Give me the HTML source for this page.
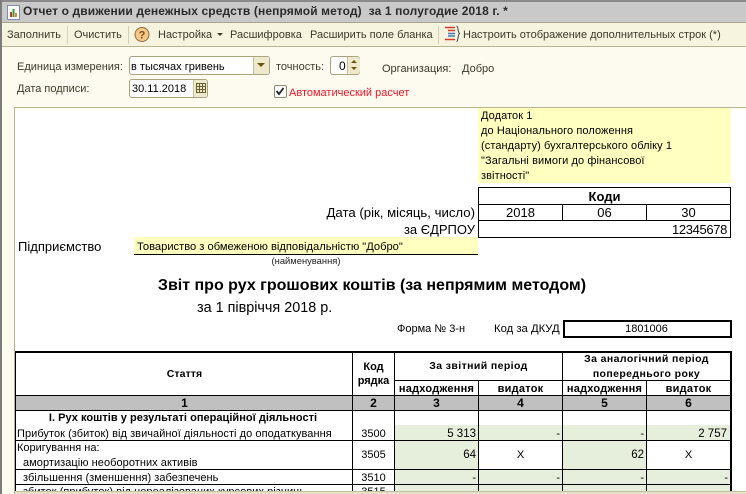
<!DOCTYPE html>
<html><head><meta charset="utf-8">
<style>
html,body{margin:0;padding:0}
body{width:746px;height:494px;position:relative;overflow:hidden;background:#fdfbef;font-family:"Liberation Sans",sans-serif;color:#1a1a1a}
.a{position:absolute;white-space:nowrap}
.l{position:absolute;white-space:nowrap;font-size:11px;line-height:15px;color:#3a3a2a}
.t{position:absolute;white-space:nowrap;font-size:11px;line-height:14px;color:#000}
.b{font-weight:bold}
.c{text-align:center}
.r{text-align:right}
.k{position:absolute;background:#000}
.g{position:absolute;background:#e6efdc}
</style></head><body>
<!-- window frame -->
<div class="a" style="left:0;top:0;width:746px;height:2px;background:#8a8a8a"></div>
<div class="a" style="left:0;top:0;width:2px;height:494px;background:#7c7c7c"></div>
<!-- title -->
<div class="a" style="left:2px;top:2px;width:744px;height:20px;background:#c9c9c9"></div>
<div class="a" style="left:2px;top:22px;width:744px;height:1px;background:#a8a48c"></div>
<svg class="a" style="left:6px;top:5px" width="15" height="15" viewBox="0 0 15 15"><rect x="1.5" y="0.5" width="12" height="14" fill="#fff" stroke="#7d8ca8"/><rect x="4" y="7" width="2" height="5" fill="#c0392b"/><rect x="6.5" y="4" width="2" height="8" fill="#3f9a3f"/><rect x="9" y="8" width="2" height="4" fill="#d08a20"/></svg>
<div class="a b" style="left:23px;top:4px;font-size:12px;line-height:15px;color:#2a2a2a;letter-spacing:.12px">Отчет о движении денежных средств (непрямой метод)&nbsp; за 1 полугодие 2018 г. *</div>
<!-- toolbar -->
<div class="a" style="left:2px;top:23px;width:744px;height:23px;background:#f6f3df"></div>
<div class="a" style="left:2px;top:46px;width:744px;height:1px;background:#b8b48f"></div>
<div class="l" style="left:7px;top:28px">Заполнить</div>
<div class="a" style="left:67px;top:26px;width:1px;height:18px;background:#d5d1b4"></div>
<div class="l" style="left:74px;top:28px">Очистить</div>
<div class="a" style="left:128px;top:26px;width:1px;height:18px;background:#d5d1b4"></div>
<svg class="a" style="left:134px;top:26px" width="16" height="17" viewBox="0 0 16 17"><circle cx="8" cy="8.5" r="7" fill="#f6c98a" stroke="#8c6a3c"/><text x="8" y="12.5" font-family="Liberation Sans" font-size="11" font-weight="bold" text-anchor="middle" fill="#7a4a16">?</text></svg>
<div class="l" style="left:158px;top:28px">Настройка</div>
<div class="a" style="left:217px;top:33px;width:0;height:0;border-left:3px solid transparent;border-right:3px solid transparent;border-top:3px solid #3a3a2a"></div>
<div class="l" style="left:230px;top:28px">Расшифровка</div>
<div class="l" style="left:310px;top:28px">Расширить поле бланка</div>
<div class="a" style="left:438px;top:26px;width:1px;height:18px;background:#d5d1b4"></div>
<svg class="a" style="left:444px;top:25px" width="17" height="18" viewBox="0 0 17 18"><path d="M1 2.5h10M4 5.5h7" stroke="#d83a2a" stroke-width="1.5"/><path d="M4 8.5h7M4 11h7" stroke="#3a7ab8" stroke-width="1.5"/><path d="M1 14.5h10" stroke="#d83a2a" stroke-width="1.5"/><path d="M12.500 1c2 0 1 6 3 7.500-2 1.500-1 8-3 8" fill="none" stroke="#33404f"/></svg>
<div class="l" style="left:463px;top:28px">Настроить отображение дополнительных строк (*)</div>
<!-- form -->
<div class="l" style="left:17px;top:60px">Единица измерения:</div>
<div class="a" style="left:129px;top:56px;width:139px;height:17px;background:#fff;border:1px solid #a8a47e;border-radius:3px"></div>
<div class="a" style="left:253px;top:57px;width:15px;height:17px;background:#efe9cb;border-left:1px solid #c4bf9d;border-radius:0 3px 3px 0"></div>
<div class="a" style="left:257px;top:63px;width:0;height:0;border-left:4px solid transparent;border-right:4px solid transparent;border-top:4px solid #6a5414"></div>
<div class="l" style="left:131px;top:60px;color:#000">в тысячах гривень</div>
<div class="l" style="left:276px;top:60px">точность:</div>
<div class="a" style="left:330px;top:56px;width:28px;height:17px;background:#fff;border:1px solid #a8a47e;border-radius:3px"></div>
<div class="a" style="left:347px;top:57px;width:12px;height:17px;background:#efe9cb;border-left:1px solid #c4bf9d;border-radius:0 3px 3px 0"></div>
<div class="a" style="left:351px;top:60px;width:0;height:0;border-left:3px solid transparent;border-right:3px solid transparent;border-bottom:3px solid #6a5414"></div>
<div class="a" style="left:351px;top:67px;width:0;height:0;border-left:3px solid transparent;border-right:3px solid transparent;border-top:3px solid #6a5414"></div>
<div class="l" style="left:339px;top:59px;color:#000;font-size:12px">0</div>
<div class="l" style="left:382px;top:62px">Организация:</div>
<div class="l" style="left:462px;top:62px">Добро</div>
<div class="l" style="left:17px;top:82px">Дата подписи:</div>
<div class="a" style="left:129px;top:79px;width:77px;height:17px;background:#fff;border:1px solid #a8a47e;border-radius:3px"></div>
<div class="a" style="left:193px;top:80px;width:13px;height:17px;background:#efe9cb;border-left:1px solid #c4bf9d;border-radius:0 3px 3px 0"></div>
<svg class="a" style="left:196px;top:83px" width="10" height="10" viewBox="0 0 10 10"><path d="M.5.500h9v9h-9zM.5 3.500h9M.5 6.500h9M3.500.500v9M6.500.500v9" fill="none" stroke="#6a5f30"/></svg>
<div class="l" style="left:132px;top:82px;color:#000">30.11.2018</div>
<div class="a" style="left:274px;top:85px;width:11px;height:11px;background:#fff;border:1px solid #8d8a70;border-radius:2px"></div>
<svg class="a" style="left:274px;top:85px" width="12" height="12" viewBox="0 0 12 12"><path d="M2.500 6l2.500 3 4.500-6" fill="none" stroke="#222" stroke-width="1.800"/></svg>
<div class="l" style="left:289px;top:86px;color:#f0142a">Автоматический расчет</div>
<!-- sheet -->
<div class="a" style="left:14px;top:107px;width:732px;height:1px;background:#b8b48f"></div>
<div class="a" style="left:14px;top:107px;width:1px;height:387px;background:#b8b48f"></div>
<div class="a" style="left:15px;top:108px;width:731px;height:383px;background:#fff;overflow:hidden"></div>
<div class="a" style="left:15px;top:491px;width:731px;height:3px;background:#e4e1cb;border-top:1px solid #c4c0a2;box-sizing:border-box"></div>
<!-- note -->
<div class="a" style="left:478px;top:108px;width:253px;height:75px;background:#ffffc0"></div>
<div class="t" style="left:481px;top:109px;line-height:15px;font-size:11px;letter-spacing:.08px">Додаток 1<br>до Національного положення<br>(стандарту) бухгалтерського обліку 1<br>"Загальні вимоги до фінансової<br>звітності"</div>
<!-- codes -->
<div class="a" style="left:478px;top:187px;width:253px;height:1px;background:#000"></div>
<div class="a" style="left:478px;top:204px;width:253px;height:1px;background:#000"></div>
<div class="a" style="left:478px;top:220px;width:253px;height:1px;background:#000"></div>
<div class="a" style="left:478px;top:237px;width:253px;height:1px;background:#000"></div>
<div class="a" style="left:478px;top:187px;width:1px;height:51px;background:#000"></div>
<div class="a" style="left:730px;top:187px;width:1px;height:51px;background:#000"></div>
<div class="a" style="left:562px;top:204px;width:1px;height:17px;background:#000"></div>
<div class="a" style="left:646px;top:204px;width:1px;height:17px;background:#000"></div>
<div class="t b c" style="left:479px;top:189px;width:251px;font-size:13px;line-height:15px">Коди</div>
<div class="t c" style="left:479px;top:205px;width:83px;font-size:13px;line-height:15px">2018</div>
<div class="t c" style="left:563px;top:205px;width:83px;font-size:13px;line-height:15px">06</div>
<div class="t c" style="left:647px;top:205px;width:83px;font-size:13px;line-height:15px">30</div>
<div class="t r" style="left:600px;top:222px;width:127px;font-size:13px;line-height:15px;letter-spacing:-.35px">12345678</div>
<div class="t r" style="left:299px;top:205px;width:176px;font-size:13.200px;line-height:15px">Дата (рік, місяць, число)</div>
<div class="t r" style="left:299px;top:222px;width:176px;font-size:13px;line-height:15px">за ЄДРПОУ</div>
<!-- enterprise -->
<div class="t" style="left:18px;top:239px;font-size:13px;line-height:15px">Підприємство</div>
<div class="a" style="left:134px;top:237px;width:344px;height:17px;background:#ffffc0;border-bottom:1px solid #000"></div>
<div class="t" style="left:137px;top:240px;font-size:11.150px;line-height:14px">Товариство з обмеженою відповідальністю "Добро"</div>
<div class="t c" style="left:134px;top:255px;width:344px;font-size:9.400px;line-height:12px;color:#222">(найменування)</div>
<div class="t b c" style="left:14px;top:277px;width:716px;font-size:16px;line-height:18px">Звіт про рух грошових коштів (за непрямим методом)</div>
<div class="t" style="left:197px;top:300px;font-size:14.400px;line-height:16px">за 1 півріччя 2018 р.</div>
<div class="t" style="left:397px;top:322px;font-size:11px;line-height:14px">Форма № 3-н</div>
<div class="t" style="left:494px;top:322px;font-size:11.300px;line-height:14px">Код за ДКУД</div>
<div class="a" style="left:563px;top:320px;width:169px;height:18px;border:2px solid #000;box-sizing:border-box"></div>
<div class="t c" style="left:562px;top:322px;width:169px;font-size:11px;line-height:14px">1801006</div>
<!-- table fills -->
<div class="a" style="left:16px;top:396px;width:714px;height:15px;background:#c0c0c0"></div>
<div class="g" style="left:395px;top:425px;width:335px;height:15px"></div>
<div class="g" style="left:395px;top:441px;width:84px;height:28px"></div>
<div class="g" style="left:563px;top:441px;width:84px;height:28px"></div>
<div class="g" style="left:395px;top:470px;width:335px;height:14px"></div>
<div class="g" style="left:395px;top:485px;width:335px;height:6px"></div>
<!-- table lines -->
<div class="k" style="left:15px;top:351px;width:717px;height:2px"></div>
<div class="k" style="left:15px;top:351px;width:1px;height:140px"></div>
<div class="k" style="left:730px;top:351px;width:2px;height:140px"></div>
<div class="k" style="left:352px;top:352px;width:1px;height:139px"></div>
<div class="k" style="left:394px;top:352px;width:1px;height:139px"></div>
<div class="k" style="left:478px;top:381px;width:1px;height:110px"></div>
<div class="k" style="left:562px;top:352px;width:1px;height:139px"></div>
<div class="k" style="left:646px;top:381px;width:1px;height:110px"></div>
<div class="k" style="left:394px;top:380px;width:336px;height:1px"></div>
<div class="k" style="left:16px;top:395px;width:714px;height:1px"></div>
<div class="k" style="left:16px;top:410px;width:714px;height:1px"></div>
<div class="k" style="left:16px;top:440px;width:714px;height:1px"></div>
<div class="k" style="left:16px;top:469px;width:714px;height:1px"></div>
<div class="k" style="left:16px;top:484px;width:714px;height:1px"></div>
<!-- table head text -->
<div class="t b c" style="left:17px;top:367px;width:335px;font-size:10.500px;letter-spacing:.1px">Стаття</div>
<div class="t b c" style="left:353px;top:360px;width:41px;font-size:11px;line-height:14px">Код<br>рядка</div>
<div class="t b c" style="left:395px;top:359px;width:167px;letter-spacing:.4px;font-size:10.500px">За звітний період</div>
<div class="t b c" style="left:563px;top:352px;width:167px;letter-spacing:.4px;font-size:10.500px;line-height:14.500px">За аналогічний період<br>попереднього року</div>
<div class="t b c" style="left:395px;top:382px;width:83px;letter-spacing:.25px;font-size:11px">надходження</div>
<div class="t b c" style="left:479px;top:382px;width:83px;letter-spacing:.25px;font-size:11px">видаток</div>
<div class="t b c" style="left:563px;top:382px;width:83px;letter-spacing:.25px;font-size:11px">надходження</div>
<div class="t b c" style="left:647px;top:382px;width:83px;letter-spacing:.25px;font-size:11px">видаток</div>
<div class="t b c" style="left:17px;top:396px;width:335px;font-size:12px">1</div>
<div class="t b c" style="left:353px;top:396px;width:41px;font-size:12px">2</div>
<div class="t b c" style="left:395px;top:396px;width:83px;font-size:12px">3</div>
<div class="t b c" style="left:479px;top:396px;width:83px;font-size:12px">4</div>
<div class="t b c" style="left:563px;top:396px;width:83px;font-size:12px">5</div>
<div class="t b c" style="left:647px;top:396px;width:83px;font-size:12px">6</div>
<!-- rows -->
<div class="t b c" style="left:17px;top:411px;width:332px;font-size:11px;letter-spacing:.03px">І. Рух коштів у результаті операційної діяльності</div>
<div class="t" style="left:17px;top:427px;font-size:11px;letter-spacing:.05px">Прибуток (збиток) від звичайної діяльності до оподаткування</div>
<div class="t c" style="left:353px;top:427px;width:41px;font-size:11px">3500</div>
<div class="t r" style="left:395px;top:427px;width:81px;font-size:11.500px">5 313</div>
<div class="t r" style="left:479px;top:427px;width:81px;font-size:11px">-</div>
<div class="t r" style="left:563px;top:427px;width:81px;font-size:11px">-</div>
<div class="t r" style="left:647px;top:427px;width:80px;font-size:11.500px">2 757</div>
<div class="t" style="left:17px;top:441px;font-size:11px">Коригування на:</div>
<div class="t" style="left:23px;top:456px;font-size:11px;letter-spacing:.05px">амортизацію необоротних активів</div>
<div class="t c" style="left:353px;top:448px;width:41px;font-size:11px">3505</div>
<div class="t r" style="left:395px;top:448px;width:81px;font-size:11.500px">64</div>
<div class="t c" style="left:479px;top:448px;width:83px;font-size:11px">Х</div>
<div class="t r" style="left:563px;top:448px;width:81px;font-size:11.500px">62</div>
<div class="t c" style="left:647px;top:448px;width:83px;font-size:11px">Х</div>
<div class="t" style="left:23px;top:471px;font-size:11px;letter-spacing:.05px">збільшення (зменшення) забезпечень</div>
<div class="t c" style="left:353px;top:471px;width:41px;font-size:11px">3510</div>
<div class="t r" style="left:395px;top:471px;width:81px;font-size:11px">-</div>
<div class="t r" style="left:479px;top:471px;width:81px;font-size:11px">-</div>
<div class="t r" style="left:563px;top:471px;width:81px;font-size:11px">-</div>
<div class="t r" style="left:647px;top:471px;width:81px;font-size:11px">-</div>
<div class="a" style="left:17px;top:485px;width:713px;height:6px;overflow:hidden">
<div class="t" style="left:6px;top:0;font-size:11px;letter-spacing:.05px">збиток (прибуток) від нереалізованих курсових різниць</div>
<div class="t c" style="left:336px;top:0;width:41px;font-size:11px">3515</div>
</div>
</body></html>
